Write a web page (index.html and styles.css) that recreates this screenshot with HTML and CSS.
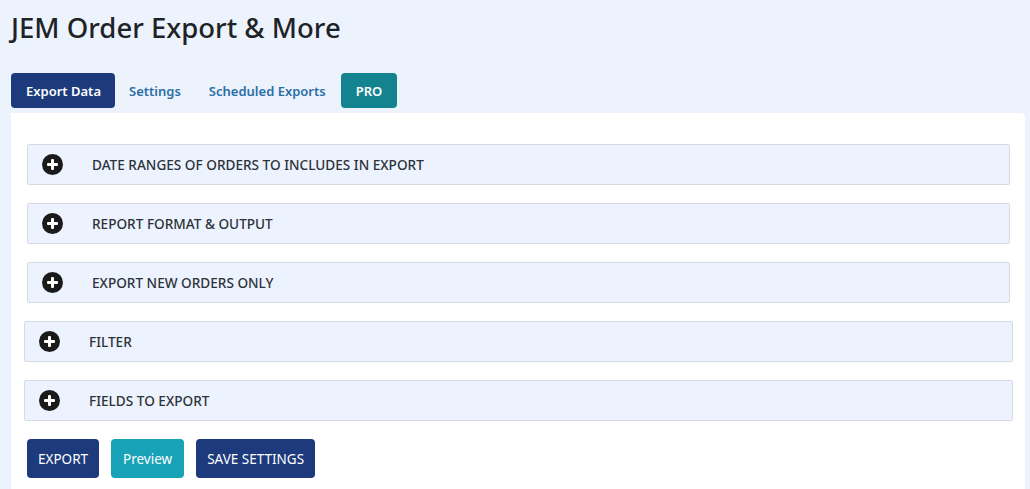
FILE: index.html
```html
<!DOCTYPE html>
<html lang="en">
<head>
  <meta charset="UTF-8">
  <title>JEM Order Export &amp; More</title>
  <link rel="stylesheet" href="styles.css">
</head>
<body>

<h1 class="page-title">JEM Order Export &amp; More</h1>

<!-- Tabs -->
<div class="tabs">
  <a class="tab active" href="#">Export Data</a>
  <a class="tab" href="#">Settings</a>
  <a class="tab" href="#">Scheduled Exports</a>
  <a class="tab pro" href="#">PRO</a>
</div>

<div class="panel">

  <div class="section">
    <span class="plus"></span>
    <span class="section-title">DATE RANGES OF ORDERS TO INCLUDES IN EXPORT</span>
  </div>

  <div class="section">
    <span class="plus"></span>
    <span class="section-title">REPORT FORMAT &amp; OUTPUT</span>
  </div>

  <div class="section">
    <span class="plus"></span>
    <span class="section-title">EXPORT NEW ORDERS ONLY</span>
  </div>

  <div class="section wide">
    <span class="plus"></span>
    <span class="section-title">FILTER</span>
  </div>

  <div class="section wide">
    <span class="plus"></span>
    <span class="section-title">FIELDS TO EXPORT</span>
  </div>

  <div class="actions">
    <button class="btn btn-dark">EXPORT</button>
    <button class="btn btn-info">Preview</button>
    <button class="btn btn-dark">SAVE SETTINGS</button>
  </div>

</div>

</body>
</html>
```

FILE: styles.css
```css
body {
  margin: 0;
  padding: 0 5px 0 11px;
  background: #edf3fd;
  font-family: "Noto Sans", "Open Sans", sans-serif;
  color: #23282d;
}

.page-title {
  margin: 0;
  padding-top: 9px;
  font-size: 27.5px;
  font-weight: 500;
  line-height: 38px;
  color: #1d2327;
}

.tabs {
  display: flex;
  align-items: center;
  margin-top: 26px;
  height: 35px;
}

.tab {
  display: flex;
  align-items: center;
  height: 35px;
  padding: 0 14px;
  font-size: 13px;
  font-weight: 600;
  color: #2b6ea6;
  text-decoration: none;
  border-radius: 4px;
  white-space: nowrap;
}

.tab.active {
  background: #1c3a7c;
  color: #fff;
  padding: 0 14px 0 15px;
}

.tab.pro {
  background: #13838f;
  color: #fff;
  padding: 0 15px;
  margin-left: 1px;
}

.panel {
  margin-top: 5px;
  background: #fff;
  border-radius: 0 4px 0 0;
  padding: 31px 15px 20px 16px;
  min-height: 340px;
}

.section {
  display: flex;
  align-items: center;
  height: 39px;
  margin-bottom: 18px;
  background: #ecf2fe;
  border: 1px solid #d6dae2;
  border-radius: 2px;
  padding-left: 14px;
}

.section.wide {
  margin-left: -3px;
  margin-right: -3px;
}

.plus {
  position: relative;
  width: 21px;
  height: 21px;
  border-radius: 50%;
  background: #1a1a1a;
  flex-shrink: 0;
}

.plus::before,
.plus::after {
  content: "";
  position: absolute;
  background: #fff;
  border-radius: 1px;
}

.plus::before {
  left: 5px;
  top: 9px;
  width: 11px;
  height: 3px;
}

.plus::after {
  left: 9px;
  top: 5px;
  width: 3px;
  height: 11px;
}

.section-title {
  margin-left: 29px;
  font-size: 13.6px;
  font-weight: 500;
  color: #2c3338;
}

.actions {
  display: flex;
  gap: 12px;
}

.btn {
  height: 39px;
  padding: 0 10px;
  font-family: inherit;
  font-size: 13.5px;
  color: #fff;
  border: 1px solid transparent;
  border-radius: 4px;
  cursor: pointer;
}

.btn-dark {
  background: #1c3a7c;
}

.btn-info {
  background: #17a2b8;
  padding: 0 11px;
}
```
